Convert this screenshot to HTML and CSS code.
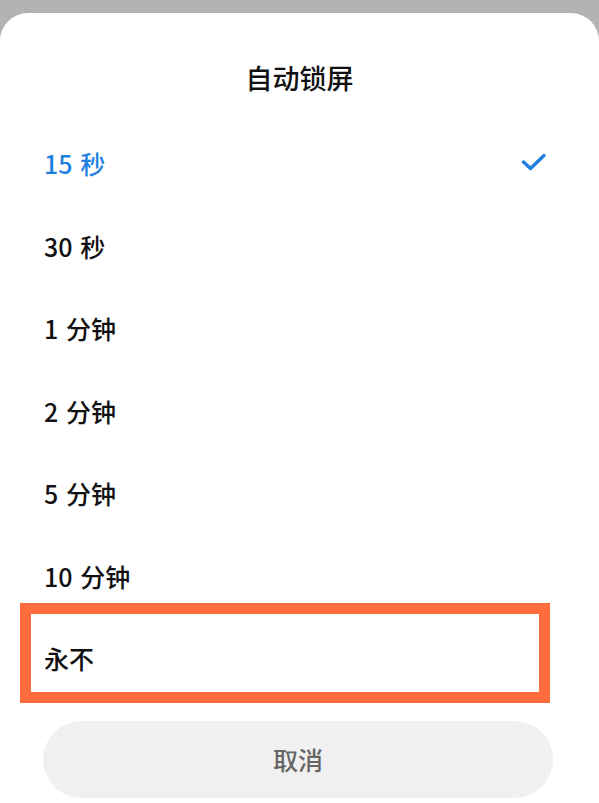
FILE: index.html
```html
<!DOCTYPE html>
<html lang="zh-CN">

<head>
    <meta charset="UTF-8">
    <meta name="viewport" content="width=device-width, initial-scale=1.0">
    <title>自动锁屏</title>
    <link rel="stylesheet" href="styles.css">
</head>

<body>
    <div class="sheet">
        <div class="title">自动锁屏</div>
        <ul class="list">
            <li class="active">
                <span>15 秒</span>
                <svg class="check" width="26" height="20" viewBox="0 0 26 20">
                    <polyline points="2.5,9 9.5,15.5 23,2.5" fill="none" stroke="#1f80e0" stroke-width="3.4"
                        stroke-linecap="round" stroke-linejoin="round" />
                </svg>
            </li>
            <li><span>30 秒</span></li>
            <li><span>1 分钟</span></li>
            <li><span>2 分钟</span></li>
            <li><span>5 分钟</span></li>
            <li><span>10 分钟</span></li>
            <li class="mark"><span>永不</span></li>
        </ul>
        <div class="cancel">取消</div>
    </div>
</body>

</html>
```

FILE: styles.css
```css
* {
    margin: 0;
    padding: 0;
}

ul {
    list-style: none;
}

body {
    background: #b3b3b3;
    font-family: "Noto Sans CJK SC", "Noto Sans", sans-serif;
    height: 803px;
    overflow: hidden;
}

.sheet {
    margin-top: 13px;
    height: 790px;
    background: #fff;
    border-radius: 28px 28px 0 0;
}

.title {
    padding-top: 48px;
    height: 34px;
    line-height: 34px;
    padding-bottom: 26.75px;
    text-align: center;
    font-size: 27px;
    font-weight: 500;
    color: #111;
}

.list li {
    height: 82.5px;
    display: flex;
    align-items: center;
    justify-content: space-between;
    padding: 0 52px 0 44px;
    font-size: 25px;
    font-weight: 500;
    word-spacing: 2px;
    color: #111;
    position: relative;
}

.list li.active {
    color: #1f80e0;
}

.list li.mark::after {
    content: "";
    position: absolute;
    left: 20px;
    top: -14px;
    width: 508px;
    height: 78px;
    border: 11px solid #ff6c3e;
}

.cancel {
    margin: 21.75px 0 0 43px;
    width: 510px;
    height: 77px;
    line-height: 77px;
    border-radius: 39px;
    background: #f0f0f0;
    text-align: center;
    font-size: 25px;
    font-weight: 500;
    color: #666;
}
```
